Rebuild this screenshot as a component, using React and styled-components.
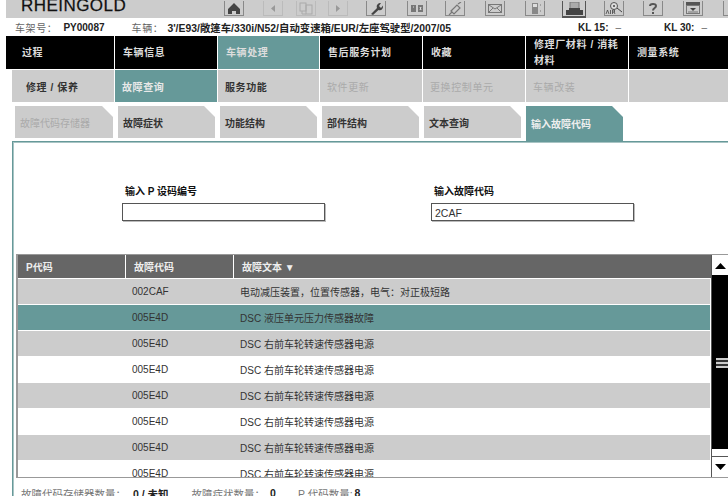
import React from 'react';
import styled, { createGlobalStyle } from 'styled-components';

const teal = '#669999';
const grey = '#cccccc';

const Global = createGlobalStyle`
  html, body { margin: 0; padding: 0; background: #fff; }
  body { width: 728px; height: 496px; overflow: hidden; font-family: "Liberation Sans", "Noto Sans CJK SC", sans-serif; }
`;

const Page = styled.div`
  width: 728px;
  height: 496px;
  overflow: hidden;
  padding-left: 6px;
  box-sizing: border-box;
`;

const TopBar = styled.div`
  height: 18px;
  background: ${grey};
  display: flex;
  align-items: flex-end;
  overflow: hidden;
  position: relative;
`;

const Brand = styled.div`
  position: absolute;
  left: 15px;
  bottom: 2px;
  font-size: 17px;
  line-height: 20px;
  color: #111;
  letter-spacing: 0.45px;
  -webkit-text-stroke: 0.25px #111;
`;

const Tools = styled.div`
  display: flex;
  padding-left: 218px;
  gap: 18px;
  align-items: flex-end;
  height: 100%;
`;

const Tool = styled.div`
  width: 20px;
  height: 15px;
  margin-bottom: 2px;
  margin-left: ${p => p.$ml || 0}px;
  flex: none;
  box-sizing: border-box;
  border: 1px solid ${p => (p.$off ? '#bbb' : '#888')};
  border-top: none;
  display: flex;
  align-items: center;
  justify-content: center;
  ${p => p.$active && 'width: 24px; height: 17px; margin-bottom: 0; border: 1px solid #555; border-top: none; border-bottom-width: 2px;'}
`;

const Info = styled.div`
  height: 18px;
  display: flex;
  align-items: center;
  font-size: 10px;
  color: #222;
  font-weight: bold;
  position: relative;
  white-space: nowrap;
`;

const InfoLabel = styled.span`
  color: #666;
  font-weight: normal;
  margin-left: ${p => p.$ml}px;
  margin-right: ${p => p.$mr}px;
  letter-spacing: ${p => p.$sp || 0}px;
`;

const InfoValue = styled.span`
  margin-left: ${p => p.$ml || 0}px;
  font-size: ${p => p.$size || 10}px;
`;

const Row = styled.div`
  display: grid;
  grid-template-columns: ${p => p.$cols};
  column-gap: ${p => p.$gap || 1}px;
  height: ${p => p.$h}px;
  margin-left: ${p => p.$ml || 0}px;
  margin-bottom: ${p => p.$mb || 0}px;
`;

const NavCell = styled.div`
  background: ${p => (p.$on ? teal : '#000')};
  color: #ddd;
  font-size: 10px;
  font-weight: bold;
  line-height: 16px;
  display: flex;
  align-items: center;
  padding-left: ${p => p.$pl || 8}px;
  padding-right: 6px;
  letter-spacing: 0.6px;
  box-sizing: border-box;
`;

const SubCell = styled.div`
  background: ${p => (p.$on ? teal : grey)};
  color: ${p => (p.$on ? '#e8e8e8' : p.$off ? '#aaa' : '#333')};
  font-size: 10px;
  font-weight: ${p => (p.$off ? 'normal' : 'bold')};
  display: flex;
  align-items: center;
  padding-left: ${p => p.$pl || 7}px;
  letter-spacing: 0.6px;
`;

const Tab = styled.div`
  background: ${p => (p.$on ? teal : grey)};
  color: ${p => (p.$on ? '#eee' : p.$off ? '#aaa' : '#333')};
  font-size: 10px;
  font-weight: ${p => (p.$off ? 'normal' : 'bold')};
  display: flex;
  align-items: center;
  padding-left: 5px;
  clip-path: polygon(0 0, calc(100% - 11px) 0, 100% 11px, 100% 100%, 0 100%);
  margin-bottom: ${p => (p.$on ? -3 : 0)}px;
`;

const Panel = styled.div`
  margin-left: 6px;
  height: 360px;
  box-sizing: border-box;
  border-top: 1px solid ${teal};
  border-left: 1px solid ${teal};
  box-shadow: inset 0 1px 0 #a8c4c4, inset 1px 0 0 #a8c4c4;
  padding-top: 43px;
  overflow: hidden;
`;

const Fields = styled.div`
  display: flex;
  padding-left: 109px;
  gap: 106px;
  height: 69px;
`;

const Field = styled.div`
  width: 203px;
  display: flex;
  flex-direction: column;
`;

const FieldLabel = styled.label`
  font-size: 10px;
  font-weight: bold;
  color: #111;
  line-height: 14px;
  margin-left: 3px;
  margin-bottom: 4px;
`;

const Input = styled.input`
  width: 203px;
  height: 18px;
  box-sizing: border-box;
  border: 1px solid #555;
  box-shadow: 1px 1px 0 #bbb;
  padding: 2px 3px 0;
  margin: 0;
  font-family: inherit;
  font-size: 10.5px;
  color: #333;
  outline: none;
`;

const TableWrap = styled.div`
  margin-left: 3px;
  display: flex;
  height: 224px;
  box-sizing: border-box;
  border-left: 2px solid #999;
  border-bottom: 1px solid #999;
  border-top: 1px solid #999;
`;

const Table = styled.div`
  width: 693px;
  overflow: hidden;
  flex: none;
`;

const cols = '107px 107px 1fr';

const Head = styled.div`
  display: grid;
  grid-template-columns: ${cols};
  column-gap: 1px;
  height: 23px;
  background: #fff;
  margin-bottom: 1px;
`;

const HeadCell = styled.div`
  background: #666;
  color: #eee;
  font-size: 10px;
  font-weight: bold;
  display: flex;
  align-items: center;
  padding-left: 8px;
`;

const DataRow = styled.div`
  display: grid;
  grid-template-columns: ${cols};
  column-gap: 1px;
  height: 25px;
  margin: 0 1px 1px 0;
  background: ${p => (p.$sel ? teal : p.$odd ? grey : '#fff')};
  font-size: 10px;
  color: #333;
  align-items: center;
`;

const DataCell = styled.div`
  padding-left: 6px;
  white-space: nowrap;
`;

const Scroll = styled.div`
  width: 17px;
  flex: none;
  display: flex;
  flex-direction: column;
  border-left: 1px solid #555;
  box-sizing: border-box;
  background: #fff;
`;

const ScrollBtn = styled.div`
  height: 20px;
  background: #fff;
  display: flex;
  align-items: center;
  justify-content: center;
  flex: none;
  border-top: 1px solid ${p => (p.$down ? '#555' : 'transparent')};
  box-sizing: border-box;
`;

const Track = styled.div`
  height: 174px;
  background: #000;
  flex: none;
  display: flex;
  align-items: center;
  justify-content: center;
`;

const Grip = styled.div`
  width: 12px;
  height: 10px;
  background: repeating-linear-gradient(to bottom, #ccc 0 2px, #333 2px 4px);
  margin-left: 3px;
  margin-top: 2px;
`;

const TrackGap = styled.div`
  height: 7px;
  flex: none;
`;

const Footer = styled.div`
  display: flex;
  align-items: center;
  height: 16px;
  padding-left: 8px;
  margin-top: 7px;
  font-size: 10.5px;
  color: #777;
  white-space: nowrap;
`;

const Stat = styled.b`
  color: #222;
  margin: 0 ${p => p.$mr}px 0 ${p => p.$ml}px;
`;

const tools = [
  { k: 'home' },
  { k: 'back', off: true, ml: 1 },
  { k: 'doc', off: true, ml: -5 },
  { k: 'fwd', off: true, ml: -6 },
  { k: 'wrench' },
  { k: 'boxes', ml: 3 },
  { k: 'plug' },
  { k: 'mail', ml: 2 },
  { k: 'phone', ml: 2 },
  { k: 'print', active: true, ml: -1 },
  { k: 'air' },
  { k: 'help', ml: 1 },
  { k: 'tray', ml: 2 },
  { k: 'last', ml: 2 },
];

const Glyph = ({ k }) => {
  const s = { width: 18, height: 13, viewBox: '0 0 18 13' };
  switch (k) {
    case 'home':
      return <svg {...s}><path d="M9 1 L15 7 V12 H11 V9 H7 V12 H3 V7 Z" fill="#444" /></svg>;
    case 'back':
      return <svg {...s}><path d="M11 3 V10 L7 6.5 Z" fill="#999" /></svg>;
    case 'fwd':
      return <svg {...s}><path d="M7 3 V10 L11 6.5 Z" fill="#999" /></svg>;
    case 'doc':
      return <svg {...s}><g fill="none" stroke="#aaa"><rect x="3" y="1" width="6" height="8" /><rect x="9" y="3" width="6" height="9" /><path d="M5 9 V12 H9" /></g></svg>;
    case 'wrench':
      return <svg {...s}><path d="M4 12 L10 6 C9 3 11 1 14 1 L12 4 L14 6 L16 3.5 C16.500 7 14 9 11.500 8 L6 13 Z" fill="#444" /></svg>;
    case 'boxes':
      return <svg {...s}><g fill="#777"><rect x="3" y="3" width="5" height="7" /><rect x="10" y="3" width="5" height="7" /></g><path d="M5 5 H6 M12 5 L13 8 M13 5 L12 8" stroke="#ddd" /></svg>;
    case 'plug':
      return <svg {...s}><g fill="none" stroke="#777" strokeWidth="1.200"><path d="M5 9 L11 3 L14 6 L8 12 Z" /><path d="M12 2 L15 0 M3 13 L6 10" /></g></svg>;
    case 'mail':
      return <svg {...s}><g fill="none" stroke="#777"><rect x="2.500" y="2.500" width="13" height="8" /><path d="M3 3 L9 7 L15 3 M3 10 L7 6 M15 10 L11 6" /></g></svg>;
    case 'phone':
      return <svg {...s}><rect x="6" y="1" width="6" height="11" fill="#888" /><rect x="7" y="2" width="4" height="3" fill="#ddd" /><path d="M14 3 H15 M14 9 H15" stroke="#777" /></svg>;
    case 'print':
      return <svg {...s}><rect x="5" y="0" width="9" height="8" fill="#aaa" stroke="#777" /><path d="M1 8 H4 V6 H15 V8 H18 V13 H1 Z" fill="#444" /></svg>;
    case 'air':
      return (
        <svg {...s}>
          <circle cx="9" cy="4" r="3.500" fill="#ddd" stroke="#555" />
          <path d="M8 4 H10 M9 3 V5 M12 6 L17 10" stroke="#444" />
          <path d="M1 12 L2.500 8 L4 12 M5.500 8 V12 M7.500 12 V8 H9.500 V10 H7.500 M9 10 L10 12" fill="none" stroke="#444" strokeWidth="0.800" />
        </svg>
      );
    case 'help':
      return <svg {...s}><path d="M6 4 C6 1.500 12 1 12 4 C12 6 9 6 9 8.500" fill="none" stroke="#555" strokeWidth="2" /><rect x="8" y="10" width="2" height="2" fill="#555" /></svg>;
    case 'tray':
      return <svg {...s}><rect x="2" y="0" width="14" height="3" fill="#555" /><rect x="2.500" y="3.500" width="13" height="8" fill="none" stroke="#777" /><path d="M6 6 H12 L9 9 Z" fill="#444" /><path d="M4 10 H14" stroke="#777" /></svg>;
    default:
      return <svg {...s}><rect x="4" y="3" width="10" height="7" fill="#888" /></svg>;
  }
};

const nav = [
  { t: '过程', pl: 16 },
  { t: '车辆信息', pl: 8 },
  { t: '车辆处理', on: true, pl: 8 },
  { t: '售后服务计划' },
  { t: '收藏', pl: 8 },
  { t: '修理厂材料 / 消耗材料', pl: 8 },
  { t: '测量系统', pl: 8 },
];

const sub = [
  { t: '修理 / 保养', pl: 14 },
  { t: '故障查询', on: true },
  { t: '服务功能' },
  { t: '软件更新', off: true },
  { t: '更换控制单元', off: true },
  { t: '车辆改装', off: true },
  { t: '', off: true },
];

const tabs = [
  { t: '故障代码存储器', off: true },
  { t: '故障症状' },
  { t: '功能结构' },
  { t: '部件结构' },
  { t: '文本查询' },
  { t: '输入故障代码', on: true },
];

const rows = [
  { c: '002CAF', x: '电动减压装置，位置传感器，电气：对正极短路', odd: true },
  { c: '005E4D', x: 'DSC 液压单元压力传感器故障', sel: true },
  { c: '005E4D', x: 'DSC 右前车轮转速传感器电源', odd: true },
  { c: '005E4D', x: 'DSC 右前车轮转速传感器电源' },
  { c: '005E4D', x: 'DSC 右前车轮转速传感器电源', odd: true },
  { c: '005E4D', x: 'DSC 右前车轮转速传感器电源' },
  { c: '005E4D', x: 'DSC 右前车轮转速传感器电源', odd: true },
  { c: '005E4D', x: 'DSC 右前车轮转速传感器电源' },
];

export default function App() {
  return (
    <Page>
      <Global />
      <TopBar>
        <Brand>RHEINGOLD</Brand>
        <Tools>
          {tools.map(t => (
            <Tool key={t.k} $off={t.off} $active={t.active} $ml={t.ml}>
              <Glyph k={t.k} />
            </Tool>
          ))}
        </Tools>
      </TopBar>
      <Info>
        <InfoLabel $ml={9} $mr={6} $sp={0.6}>车架号：</InfoLabel>
        <InfoValue>PY00087</InfoValue>
        <InfoLabel $ml={27} $mr={4} $sp={0.6}>车辆：</InfoLabel>
        <InfoValue $size={10.4}>3'/E93/敞篷车/330i/N52/自动变速箱/EUR/左座驾驶型/2007/05</InfoValue>
        <InfoValue $ml={127}>KL 15:</InfoValue>
        <InfoLabel $ml={7} $mr={0}>–</InfoLabel>
        <InfoValue $ml={43}>KL 30:</InfoValue>
        <InfoLabel $ml={7} $mr={0}>–</InfoLabel>
      </Info>
      <Row $cols="108px 102px 101px 102px 102px 102px 1fr" $h={33} $mb={1}>
        {nav.map(n => (
          <NavCell key={n.t} $on={n.on} $pl={n.pl}>{n.t}</NavCell>
        ))}
      </Row>
      <Row $cols="102px 102px 101px 102px 102px 102px 1fr" $h={32} $ml={6} $mb={4}>
        {sub.map((n, i) => (
          <SubCell key={i} $on={n.on} $off={n.off} $pl={n.pl}>{n.t}</SubCell>
        ))}
      </Row>
      <Row $cols="98px 97px 97px 97px 97px 97px" $gap={5} $h={32} $ml={9} $mb={3}>
        {tabs.map(n => (
          <Tab key={n.t} $on={n.on} $off={n.off}>{n.t}</Tab>
        ))}
      </Row>
      <Panel>
        <Fields>
          <Field>
            <FieldLabel>输入 P 设码编号</FieldLabel>
            <Input readOnly value="" />
          </Field>
          <Field>
            <FieldLabel>输入故障代码</FieldLabel>
            <Input readOnly value="2CAF" />
          </Field>
        </Fields>
        <TableWrap>
          <Table>
            <Head>
              <HeadCell>P代码</HeadCell>
              <HeadCell>故障代码</HeadCell>
              <HeadCell>故障文本 ▼</HeadCell>
            </Head>
            {rows.map((r, i) => (
              <DataRow key={i} $odd={r.odd} $sel={r.sel}>
                <DataCell />
                <DataCell>{r.c}</DataCell>
                <DataCell>{r.x}</DataCell>
              </DataRow>
            ))}
          </Table>
          <Scroll>
            <ScrollBtn>
              <svg width="11" height="6" viewBox="0 0 11 6"><path d="M5.500 0 L11 6 H0 Z" fill="#000" /></svg>
            </ScrollBtn>
            <Track><Grip /></Track>
            <TrackGap />
            <ScrollBtn $down>
              <svg width="11" height="6" viewBox="0 0 11 6"><path d="M0 0 H11 L5.500 6 Z" fill="#000" /></svg>
            </ScrollBtn>
          </Scroll>
        </TableWrap>
        <Footer>
          故障代码存储器数量：<Stat $ml={7} $mr={23}>0 / 未知</Stat>
          故障症状数量：<Stat $ml={5} $mr={22}>0</Stat>
          P 代码数量:<Stat $ml={2} $mr={0}>8</Stat>
        </Footer>
      </Panel>
    </Page>
  );
}
